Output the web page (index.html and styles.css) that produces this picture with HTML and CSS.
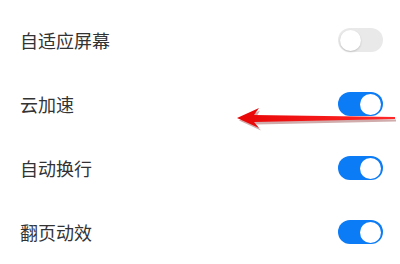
FILE: index.html
```html
<!DOCTYPE html>
<html lang="zh-CN">
<head>
    <meta charset="UTF-8">
    <meta name="viewport" content="width=device-width, initial-scale=1.0">
    <title>设置</title>
    <link rel="stylesheet" href="styles.css">
</head>
<body>

    <div class="lista">
        <div class="item">
            <span class="rotulo">自适应屏幕</span>
            <span class="chave"><span class="bola"></span></span>
        </div>
        <div class="item">
            <span class="rotulo">云加速</span>
            <span class="chave ligada"><span class="bola"></span></span>
        </div>
        <div class="item">
            <span class="rotulo">自动换行</span>
            <span class="chave ligada"><span class="bola"></span></span>
        </div>
        <div class="item">
            <span class="rotulo">翻页动效</span>
            <span class="chave ligada"><span class="bola"></span></span>
        </div>
    </div>

    <!-- seta vermelha por cima -->
    <svg class="seta" width="400" height="264" viewBox="0 0 400 264">
        <defs>
            <linearGradient id="vermelho" x1="0" x2="1" y1="0" y2="0">
                <stop offset="0" stop-color="#e80606"/>
                <stop offset="1" stop-color="#ff2a2a"/>
            </linearGradient>
        </defs>
        <polygon points="238,119 259,109 255,116 395,118 395,120 255,123 260,129" fill="#7a1010" opacity="0.35" transform="translate(1,1.5)"/>
        <polygon points="237,118 259,108 254,115 395,117 395,119 254,122 259,128" fill="url(#vermelho)"/>
    </svg>

</body>
</html>
```

FILE: styles.css
```css
body {
    font-family: "Noto Sans CJK SC", "Noto Sans", sans-serif;
    margin: 0;
    padding: 0;
    background: #fff;
    color: #333;
    width: 400px;
    height: 264px;
    overflow: hidden;
    position: relative;
}

.lista {
    padding: 8px 17px 0 20px;
}

.item {
    height: 64px;
    display: flex;
    justify-content: space-between;
    align-items: center;
}

.rotulo {
    font-size: 18px;
    line-height: 24px;
}

.chave {
    width: 45px;
    height: 24px;
    border-radius: 12px;
    background: #e9e9e9;
    display: flex;
    align-items: center;
    padding: 0 2px;
    box-sizing: border-box;
}

.bola {
    width: 21px;
    height: 21px;
    border-radius: 50%;
    background: #fff;
    box-shadow: 0 1px 2px rgba(0, 0, 0, 0.18);
}

.chave.ligada {
    background: #0b7bf6;
    justify-content: flex-end;
}

.chave.ligada .bola {
    box-shadow: none;
}

.seta {
    position: absolute;
    left: 0;
    top: 0;
}
```
